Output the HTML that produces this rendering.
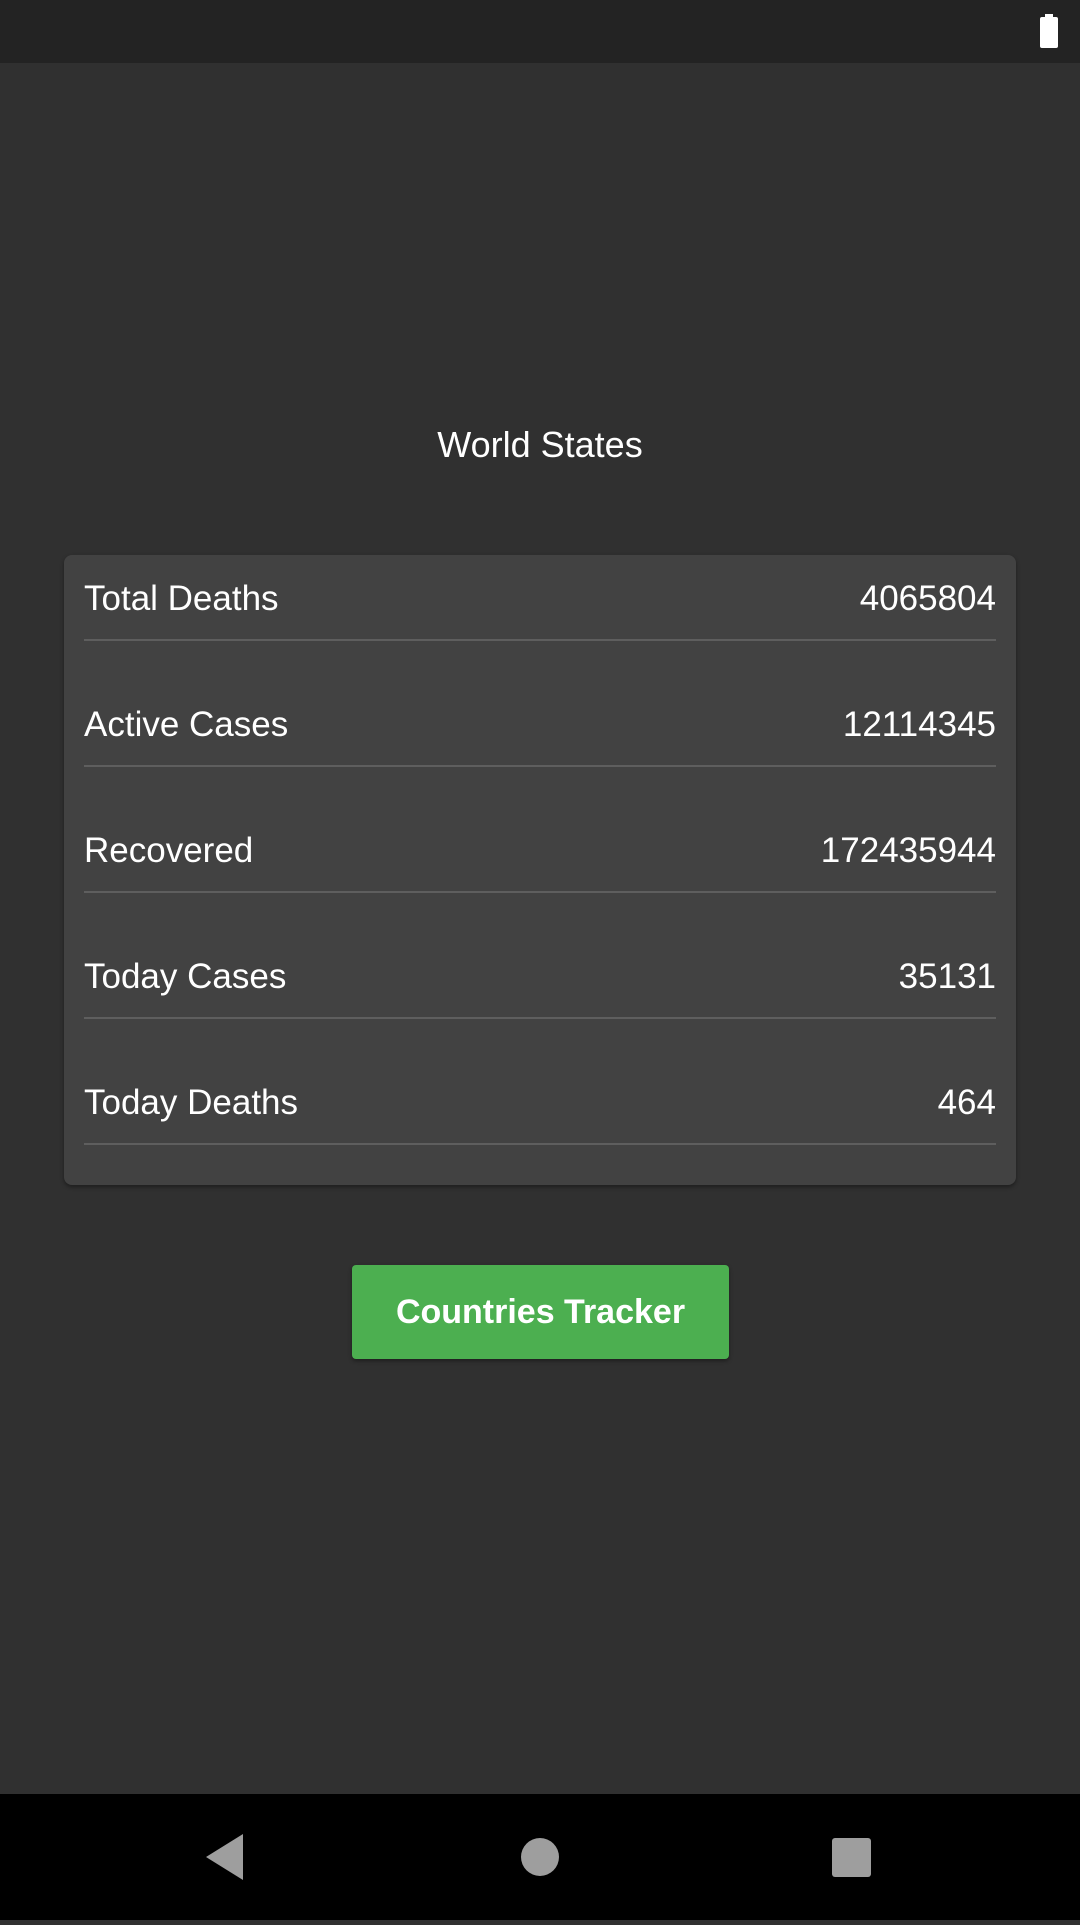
<!DOCTYPE html>
<html><head><meta charset="utf-8"><style>
body{margin:0;width:1080px;height:1920px;background:#303030;font-family:"Liberation Sans",Roboto,sans-serif;position:relative;overflow:hidden;color:#fff}
.status{position:absolute;left:0;top:0;width:1080px;height:63px;background:#232323}
.nav{position:absolute;left:0;top:1794px;width:1080px;height:126px;background:#000}
.title{position:absolute;top:424px;width:1080px;text-align:center;font-size:36px}
.card{position:absolute;left:64px;top:555px;width:952px;height:630px;background:#424242;border-radius:8px;box-shadow:0 2px 4px rgba(0,0,0,.4)}
.row{position:absolute;left:20px;width:912px;height:126px;border-bottom:2px solid #5e5e5e;box-sizing:border-box}
.row span{position:absolute;top:64px;font-size:35px}
.row .v{right:0}
.btn{position:absolute;left:352px;top:1265px;width:377px;height:94px;background:#4caf50;border-radius:4px;box-shadow:0 2px 4px rgba(0,0,0,.4);text-align:center;line-height:94px;font-size:34px;font-weight:bold}
</style></head><body>
<div class="status"><svg style="position:absolute;left:1040px;top:14px" width="18" height="34"><rect x="5" y="0" width="8" height="4" fill="#fff"/><rect x="0" y="3" width="18" height="31" rx="2" fill="#fff"/></svg></div>
<div class="title">World States</div>
<div class="card">
<div class="row" style="top:-40px"><span>Total Deaths</span><span class="v">4065804</span></div>
<div class="row" style="top:86px"><span>Active Cases</span><span class="v">12114345</span></div>
<div class="row" style="top:212px"><span>Recovered</span><span class="v">172435944</span></div>
<div class="row" style="top:338px"><span>Today Cases</span><span class="v">35131</span></div>
<div class="row" style="top:464px"><span>Today Deaths</span><span class="v">464</span></div>
</div>
<div class="btn">Countries Tracker</div>
<div class="nav"><svg width="1080" height="126">
<polygon points="206,63 243,40 243,86" fill="#9e9e9e"/>
<circle cx="540" cy="63" r="19" fill="#9e9e9e"/>
<rect x="832" y="44" width="39" height="39" rx="3" fill="#9e9e9e"/>
</svg></div>
</body></html>
